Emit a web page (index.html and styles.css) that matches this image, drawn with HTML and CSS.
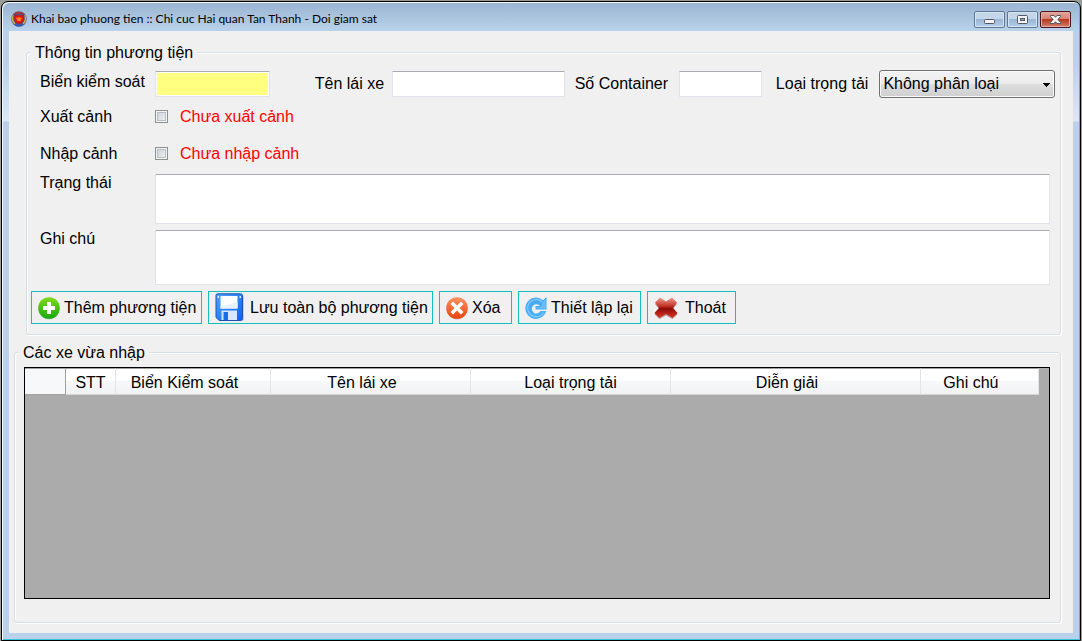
FILE: index.html
```html
<!DOCTYPE html>
<html lang="vi">
<head>
<meta charset="utf-8">
<title>Khai bao phuong tien</title>
<link rel="stylesheet" href="styles.css">
</head>
<body>
<main class="window">
  <header class="titlebar">
    <svg class="app-icon" viewBox="0 0 16 16" aria-hidden="true">
      <circle cx="8" cy="8" r="7.8" fill="#6d5a6a"/>
      <path d="M2.6 4C1 7 1.400 10.500 4 12.800M13.400 4c1.600 3 1.200 6.500-1.400 8.800" fill="none" stroke="#c9b84a" stroke-width="1.400"/>
      <path d="M4 13.200Q8 16 12 13.200" fill="none" stroke="#2c5cc0" stroke-width="1.800"/>
      <path d="M3.500 3.500Q8 0 12.500 3.500" fill="none" stroke="#b03038" stroke-width="1.600"/>
      <path d="M3 4h10v4.500Q12.300 12 8 13.200 3.700 12 3 8.500z" fill="#e8150c" stroke="#2040a0" stroke-width=".6"/>
      <path d="M8 5.500l.8 1.300 2.700.2-1.900 1.500.2 1.500h-3.600l.2-1.500L4.500 7l2.700-.2z" fill="#ff8a1c"/>
    </svg>
    <h1 class="title">Khai bao phuong tien :: Chi cuc Hai quan Tan Thanh - Doi giam sat</h1>
    <div class="caption-buttons">
      <button class="caption" type="button" aria-label="Minimize"><svg viewBox="0 0 29 15"><rect x="9.500" y="7.500" width="10" height="4" rx="1" fill="#f4f4f4" stroke="#535666"/></svg></button>
      <button class="caption" type="button" aria-label="Maximize"><svg viewBox="0 0 29 15"><rect x="9.500" y="3.500" width="10" height="8" rx="1" fill="#f4f4f4" stroke="#535666"/><rect x="12.500" y="6.500" width="4" height="2" fill="#8facc9" stroke="#535666"/></svg></button>
      <button class="caption caption-close" type="button" aria-label="Close"><svg viewBox="0 0 29 15"><path d="M9.500 3.500h3.500l1.500 1.800L16 3.500h3.500v1l-2.600 3 2.600 3v1H16l-1.500-1.800-1.500 1.800H9.500v-1l2.600-3-2.600-3z" fill="#f6f6f6" stroke="#535666"/></svg></button>
    </div>
  </header>
  <div class="client">
    <fieldset class="group group-info">
      <legend>Thông tin phương tiện</legend>
      <form class="form">
        <div class="row row-top">
          <label class="row-label" for="plate">Biển kiểm soát</label>
          <input class="box plate" id="plate" type="text">
          <label class="driver-label" for="driver">Tên lái xe</label>
          <input class="box driver" id="driver" type="text">
          <label class="mid-label" for="container">Số Container</label>
          <input class="box container" id="container" type="text">
          <label class="mid-label" for="load">Loại trọng tải</label>
          <select class="load" id="load"><option>Không phân loại</option></select>
        </div>
        <div class="row row-check">
          <span class="row-label">Xuất cảnh</span>
          <input class="check" id="out" type="checkbox">
          <label class="status" for="out">Chưa xuất cảnh</label>
        </div>
        <div class="row row-check">
          <span class="row-label">Nhập cảnh</span>
          <input class="check" id="in" type="checkbox">
          <label class="status" for="in">Chưa nhập cảnh</label>
        </div>
        <div class="row row-area">
          <label class="row-label" for="state">Trạng thái</label>
          <textarea class="box area" id="state"></textarea>
        </div>
        <div class="row row-area">
          <label class="row-label" for="note">Ghi chú</label>
          <textarea class="box area area-tall" id="note"></textarea>
        </div>
      </form>
      <div class="actions">
        <button class="action action-add" type="button">
          <svg width="22" height="24" viewBox="0 0 22 24" aria-hidden="true">
            <defs><linearGradient id="green" x2="0" y2="1"><stop stop-color="#80dc18"/><stop offset="1" stop-color="#16a80e"/></linearGradient></defs>
            <ellipse cx="11" cy="13" rx="10.500" ry="10.500" fill="#b9c4b6"/>
            <circle cx="11" cy="12" r="10.800" fill="url(#green)"/>
            <path d="M9 6h4v4h4v4h-4v4H9v-4H5v-4h4z" fill="#fff"/>
          </svg>Thêm phương tiện</button>
        <button class="action action-save" type="button">
          <svg width="29" height="29" viewBox="0 0 29 29" aria-hidden="true">
            <defs><linearGradient id="blue" x2="1" y2="1"><stop stop-color="#4fa4f8"/><stop offset="1" stop-color="#0763f3"/></linearGradient></defs>
            <path d="M3 2h24a1.500 1.500 0 0 1 1.500 1.500v24H3z" fill="#a9adb4"/>
            <path d="M2.500.8h23a2 2 0 0 1 2 2v22.700a2 2 0 0 1-2 2H4.500l-3.500-3V2.300A1.500 1.500 0 0 1 2.500.8z" fill="url(#blue)" stroke="#1b50b6"/>
            <path d="M5.500 3h17v12.500h-17z" fill="#fbfdff"/><path d="M5.500 13.500L22.500 9v6.500h-17z" fill="#e9f3ff"/>
            <path d="M6.500 17.500h15.500v9.500H6.500z" fill="#d7e7ff"/><path d="M8.500 19h4.500v8H8.500z" fill="#176de9"/>
            <path d="M2.500 3h1.500v2H2.500zM24.500 3H26v2h-1.500z" fill="#dceaff"/>
          </svg>Lưu toàn bộ phương tiện</button>
        <button class="action action-delete" type="button">
          <svg width="22" height="24" viewBox="0 0 22 24" aria-hidden="true">
            <defs><linearGradient id="orange" x2="0" y2="1"><stop stop-color="#ff9262"/><stop offset="1" stop-color="#e8430d"/></linearGradient></defs>
            <circle cx="11" cy="13" r="10.500" fill="#c9b8b0"/>
            <circle cx="11" cy="12" r="10.800" fill="url(#orange)"/>
            <path d="M7 5.500l4 4 4-4L17.500 8l-4 4 4 4-2.500 2.500-4-4-4 4L4.500 16l4-4-4-4z" fill="#fff"/>
          </svg>Xóa</button>
        <button class="action action-reset" type="button">
          <svg width="22" height="24" viewBox="0 0 22 24" aria-hidden="true">
            <defs><linearGradient id="sky" x2="0" y2="1"><stop stop-color="#4ba8ee"/><stop offset="1" stop-color="#46b0fa"/></linearGradient></defs>
            <path d="M21.500 1v12.500H10.500V10h4.500A4.600 4.600 0 1 0 15.500 15h5.700A10.600 10.600 0 1 1 18 4.300z" fill="url(#sky)"/>
            <path d="M17 5.700A8.600 8.600 0 1 0 18.600 16.500" fill="none" stroke="#84cbff" stroke-width="1.200"/>
            <path d="M20.500 3.500v9h-9v-1.300h4.500l1.500-4.700z" fill="#6cc0fa"/>
          </svg>Thiết lập lại</button>
        <button class="action action-exit" type="button">
          <svg width="24" height="24" viewBox="0 0 24 24" aria-hidden="true">
            <defs><linearGradient id="red" x2="0" y2="1"><stop stop-color="#ef9d91"/><stop offset=".4" stop-color="#c5382a"/><stop offset=".55" stop-color="#8b0d08"/><stop offset="1" stop-color="#e23326"/></linearGradient></defs>
            <path d="M1 8l5-5.500 6 4.500 6-4.500L23 8l-4 5 4.500 5.500-5 4.500-6.500-3.500L5.500 23 .5 18.500 5 13z" fill="#b5a09e"/>
            <path d="M1 6.500L6 1.500l6 4 6-4 5 5-4 5.500 4.500 5-5 5-6.500-4L5.500 22l-5-5L5 12z" fill="url(#red)"/>
          </svg>Thoát</button>
      </div>
    </fieldset>
    <fieldset class="group group-list">
      <legend>Các xe vừa nhập</legend>
      <div class="grid">
        <table class="vehicles">
          <colgroup><col class="c-head"><col class="c-stt"><col class="c-plate"><col class="c-wide"><col class="c-wide"><col class="c-desc"><col></colgroup>
          <thead><tr><td class="corner"></td><th class="flat">STT</th><th>Biển Kiểm soát</th><th>Tên lái xe</th><th class="flat">Loại trọng tải</th><th>Diễn giải</th><th>Ghi chú</th></tr></thead>
        </table>
      </div>
    </fieldset>
  </div>
</main>
</body>
</html>
```
FILE: styles.css
```css
* { box-sizing: border-box; }

body {
  margin: 0;
  padding: 1px 1px 0;
  min-height: 100vh;
  display: flex;
  background: #9b9b99;
  color: #000;
  font: 16px/20px "Liberation Sans", Arial, sans-serif;
}

input, select, textarea, button { font: inherit; color: inherit; }

.window {
  flex: 1;
  min-width: 0;
  display: flex;
  flex-direction: column;
  border: 1px solid #000;
  border-radius: 7px 7px 0 0;
  background: linear-gradient(#99b4d1, #b9d1ea 28px, #b9d1ea 60px, #dce8f6 119px, #b9d1ea 120px);
  box-shadow: inset 1px 1px 0 #f4f8fc, inset -1px -1px 0 #35c4dc;
}

.titlebar {
  height: 29px;
  display: flex;
  align-items: center;
  padding: 5px 9px 0;
  gap: 4px;
}

.app-icon { width: 16px; height: 16px; }

.title {
  flex: 1;
  margin: 0;
  font: 12px/16px Lato, "Open Sans", sans-serif;
}

.caption-buttons { display: flex; gap: 2px; }

.caption {
  width: 31px;
  height: 17px;
  padding: 0;
  border: 1px solid #5f7896;
  border-radius: 2px;
  background: linear-gradient(#c3d6ea 45%, #9ab6d3 50%, #b5cfe9);
  box-shadow: inset 0 0 0 1px #d5e4f3;
}

.caption svg { display: block; width: 29px; height: 15px; }

.caption-close {
  border-color: #4a1420;
  background: linear-gradient(#e5a599, #d58474 45%, #b33a20 50%, #d0806a);
  box-shadow: inset 0 0 0 1px #e3aca2;
}

.client {
  flex: 1;
  display: flex;
  flex-direction: column;
  gap: 6px;
  margin: 0 7px 7px;
  padding: 10px 12px 10px 5px;
  background: #f0f0f0;
}

.group {
  min-width: 0;
  margin: 0;
  border: 1px solid #d5dfe5;
  border-radius: 3px;
  box-shadow: inset 1px 1px 0 #fff, 1px 1px 0 #fff;
}

.group legend { padding: 2px 4px 0; background: #f0f0f0; }

.group-info { margin-left: 12px; padding: 7px 5px 10px 4px; }

.group-list {
  flex: 1;
  display: flex;
  flex-direction: column;
  padding: 4px 10px 23px 4px;
}

.form { padding-left: 9px; }

.row { display: flex; white-space: nowrap; }

.row-label { width: 115px; flex: none; }

.row-top { align-items: center; height: 28px; }
.row-top .row-label { align-self: flex-start; line-height: 24px; }

.row-check { align-items: center; height: 37px; }

.row-area { padding: 2px 5px 4px 0; }
.row-area .row-label { line-height: 18px; }

.box {
  min-width: 0;
  height: 26px;
  padding: 2px;
  border: 1px solid #e2e3ea;
  border-top-color: #abadb3;
  border-radius: 1px;
  background: #fff;
}

.plate { flex: 115 1 115px; background: #ffff80; box-shadow: inset 0 0 0 1px #fff; }
.driver { flex: 173 1 173px; }
.container { flex: 83 1 83px; }
.driver-label { margin: 0 8px 0 45px; }
.mid-label { margin: 0 11px 0 10px; }
.mid-label + .container { margin-right: 4px; }

.load {
  flex: 176 1 176px;
  min-width: 0;
  height: 28px;
  padding: 0 20px 0 3px;
  appearance: none;
  border: 1px solid #707070;
  border-radius: 3px;
  background:
    linear-gradient(#000, #000) right 4px top 12px / 7px 1px no-repeat,
    linear-gradient(#000, #000) right 5px top 13px / 5px 1px no-repeat,
    linear-gradient(#000, #000) right 6px top 14px / 3px 1px no-repeat,
    linear-gradient(#000, #000) right 7px top 15px / 1px 1px no-repeat,
    linear-gradient(#f2f2f2, #ebebeb 50%, #dddddd 51%, #cfcfcf);
  box-shadow: inset 0 0 0 1px #fafafa;
}

.check {
  appearance: none;
  width: 13px;
  height: 13px;
  margin: 0 12px 0 0;
  border: 1px solid #8e8f8f;
  background: linear-gradient(135deg, #c5cad3, #f6f6f6);
  box-shadow: inset 0 0 0 1px #f4f4f4, inset 0 0 0 2px #b9bdc5;
}

.check:checked { background: #3c5a96; }

.status { color: #f00; }

.area { flex: 1; height: 50px; resize: none; }
.area-tall { height: 55px; }

.actions { display: flex; gap: 6px; margin-top: 2px; }

.action {
  height: 33px;
  display: flex;
  align-items: center;
  gap: 4px;
  padding: 0 0 0 6px;
  border: 1px solid #14c0bc;
  background: #f0f0f0;
  white-space: nowrap;
}

.action svg { flex: none; }
.action-add { width: 171px; }
.action-save { width: 225px; gap: 6px; }
.action-delete { width: 73px; }
.action-reset { width: 123px; }
.action-exit { width: 89px; gap: 7px; }

.grid { flex: 1; margin-left: 5px; border: 1px solid #000; background: #ababab; }

.vehicles {
  width: 99%;
  table-layout: fixed;
  border-collapse: separate;
  border-spacing: 0;
}

.vehicles th {
  height: 27px;
  padding: 2px 17px 0 0;
  border-right: 1px solid #e3e4e6;
  border-bottom: 1px solid #d5d5d5;
  border-top: 1px solid #a0a0a0;
  background: linear-gradient(#fff 45%, #f7f8fa 50%, #f1f2f4);
  font-weight: normal;
}

.vehicles .flat { padding-right: 0; }

.corner {
  height: 27px;
  padding: 0;
  border: 1px solid #a0a0a0;
  border-left: 0;
  background: #f7f8fa;
}

.c-head { width: 41px; }
.c-stt { width: 50px; }
.c-plate { width: 155px; }
.c-wide { width: 200px; }
.c-desc { width: 250px; }
```
